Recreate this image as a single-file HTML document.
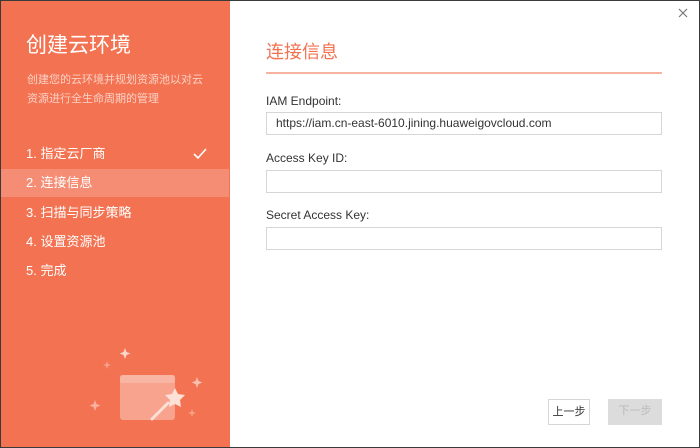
<!DOCTYPE html><html><head><meta charset="utf-8"><style>
*{margin:0;padding:0;box-sizing:border-box}
body{width:700px;height:448px;overflow:hidden;background:#fff;font-family:"Liberation Sans","Noto Sans CJK SC",sans-serif;position:relative}
.frame{position:absolute;left:0;top:0;width:700px;height:448px;border:1px solid #3a3a3a;pointer-events:none;z-index:5}
.left{position:absolute;left:1px;top:1px;width:229px;height:446px;background:#f37251;color:#fff}
.t{position:absolute;left:25px;top:28px;font-size:21px}
.sub{position:absolute;left:26px;top:70px;font-size:11px;line-height:19px;color:#fbd2c6;width:178px}
.step{position:absolute;left:0;width:228px;height:28px;line-height:28px;padding-left:25px;font-size:13px}
.hl{background:#f58d74}
.chk{position:absolute;left:192px;top:8px}
h2{position:absolute;left:266px;top:38px;font-size:18px;font-weight:normal;color:#f37251}
.line{position:absolute;left:266px;top:72px;width:396px;height:2px;background:#f9b3a1}
.lb{position:absolute;left:266px;font-size:12px;color:#333}
.in{position:absolute;left:266px;width:396px;height:23px;border:1px solid #d6d6d6;font-size:12px;color:#333;padding-left:9px;line-height:21px}
.btn{position:absolute;top:399px;height:26px;font-size:11px;text-align:center;line-height:24px}
</style></head><body>
<div class="frame"></div>
<div class="left">
<div class="t">创建云环境</div>
<div class="sub">创建您的云环境并规划资源池以对云资源进行全生命周期的管理</div>
<div class="step" style="top:139px">1. 指定云厂商<svg class="chk" width="14" height="11" viewBox="0 0 14 11"><path d="M1 6l4 4 8-9" fill="none" stroke="#fff" stroke-width="1.6"/></svg></div>
<div class="step hl" style="top:168px">2. 连接信息</div>
<div class="step" style="top:198px">3. 扫描与同步策略</div>
<div class="step" style="top:227px">4. 设置资源池</div>
<div class="step" style="top:256px">5. 完成</div>
<svg style="position:absolute;left:79px;top:329px" width="150" height="118" viewBox="0 0 150 118">
<g fill="#fff">
<path d="M45 18l1.5 4 4 1.5-4 1.5-1.5 4-1.5-4-4-1.5 4-1.5z" opacity=".7"/>
<path d="M27 31l1 3 3 1-3 1-1 3-1-3-3-1 3-1z" opacity=".35"/>
<path d="M117 47l1.5 4 4 1.5-4 1.5-1.5 4-1.5-4-4-1.5 4-1.5z" opacity=".55"/>
<path d="M15 70l1.5 4 4 1.5-4 1.5-1.5 4-1.5-4-4-1.5 4-1.5z" opacity=".45"/>
<path d="M112 79l1 3 3 1-3 1-1 3-1-3-3-1 3-1z" opacity=".35"/>
<rect x="40" y="45" width="55" height="45" rx="3" opacity=".35"/>
<rect x="40" y="45" width="55" height="8" rx="2" opacity=".2"/>
<path d="M72 89l16-16" stroke="#fde0d6" stroke-width="3" stroke-linecap="round"/>
<path d="M95 58l3 6 7 1-5 5 1 7-6-3-6 3 1-7-5-5 7-1z" fill="#fde0d6"/>
</g></svg>
</div>
<svg style="position:absolute;left:678px;top:8px" width="10" height="10" viewBox="0 0 10 10"><path d="M1 1l8 8M9 1l-8 8" stroke="#777" stroke-width="1.2"/></svg>
<h2>连接信息</h2><div class="line"></div>
<div class="lb" style="top:94px">IAM Endpoint:</div>
<div class="in" style="top:112px">https://iam.cn-east-6010.jining.huaweigovcloud.com</div>
<div class="lb" style="top:151px">Access Key ID:</div>
<div class="in" style="top:170px"></div>
<div class="lb" style="top:208px">Secret Access Key:</div>
<div class="in" style="top:227px"></div>
<div class="btn" style="left:548px;width:42px;border:1px solid #d6d6d6;color:#333">上一步</div>
<div class="btn" style="left:608px;width:54px;background:#dcdcdc;color:#bbb">下一步</div>
</body></html>
